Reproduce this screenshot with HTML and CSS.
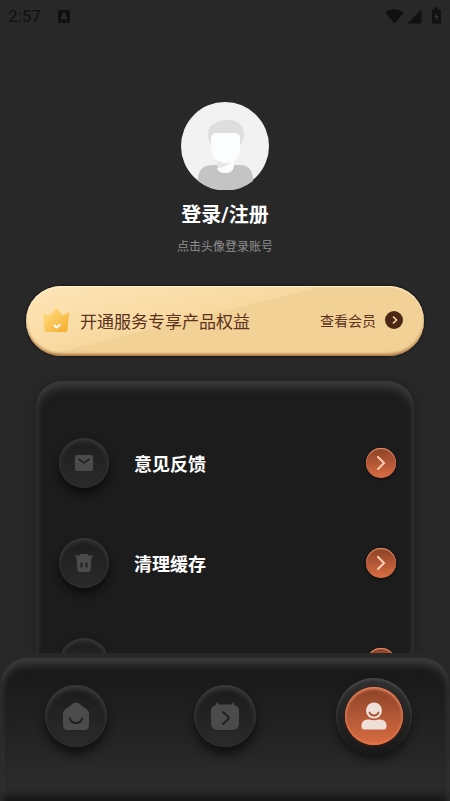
FILE: index.html
```html
<!DOCTYPE html>
<html lang="zh-CN">
<head>
<meta charset="utf-8">
<meta name="viewport" content="width=device-width, initial-scale=1">
<title>我的</title>
<link rel="stylesheet" href="styles.css">
</head>
<body>
<header class="status">
  <span class="time">2:57</span>
  <svg class="status-app" width="12" height="13" viewBox="0 0 12 13"><rect width="12" height="13" rx="1" fill="#111"/><path d="M3.3 9.500 6 3.500l2.700 6M4.300 7.700h3.400" fill="none" stroke="#333" stroke-width="1.400"/></svg>
  <svg class="status-icons" width="58" height="18" viewBox="0 0 58 18"><g fill="#111"><path d="M1 5.500Q10.500-1.500 20 5.500L10.500 16.500Z"/><path d="M37.500 2.500V16.500H23.500Z"/><path d="M48 2.500h2V.5h4v2h2q1 0 1 1v12q0 1-1 1h-7q-1 0-1-1z"/></g><path d="m53.500 5-3 5h2l-1 4.500 3-5.500h-2z" fill="#3a3a3a"/></svg>
</header>

<main class="page">
  <section class="profile">
    <button class="avatar" aria-label="头像">
      <svg width="88" height="88" viewBox="0 0 88 88">
        <circle cx="44" cy="44" r="44" fill="#f2f2f2"/>
        <path d="M17 79V76Q18 63 32 63H58Q71 63 72 76V79A44 44 0 0 1 17 79Z" fill="#c4c4c4"/>
        <path d="M36 56H53V63Q52 71 45 71Q37 71 36 63Z" fill="#e8e8e8"/>
        <path d="M36 66Q46 66 53 57V63Q52 71 45 71Q37 71 36 66Z" fill="#fdfdfd"/>
        <path d="M31 43Q27 40 27 33Q27 23 35 21Q38 18 45 18H50Q62 20 63 31Q63 39 59 43Z" fill="#dedede"/>
        <path d="M30 36Q30 31 36 31H53Q59 31 59 36V46Q58 61 45 61Q31 60 30 46Z" fill="#fcfdff"/>
      </svg>
    </button>
    <h1 class="name">登录/注册</h1>
    <p class="hint">点击头像登录账号</p>
  </section>

  <a class="banner" href="#vip">
    <svg class="crown" width="26" height="26" viewBox="0 0 26 26">
      <defs><linearGradient id="gold" x1="0" y1="0" x2="1" y2="1"><stop offset="0" stop-color="#ffe18b"/><stop offset="1" stop-color="#f5ac28"/></linearGradient></defs>
      <path d="M0 6Q4 8 6.500 8.500L13 1 19.500 8.500Q22 8 26 5L24.500 23Q24.400 25 22.500 25H3.500Q1.700 25 1.500 23Z" fill="url(#gold)"/>
      <path d="m11 18 2.500 2.500 4-3" fill="none" stroke="#fff" stroke-width="2"/>
    </svg>
    <span class="banner-title">开通服务专享产品权益</span>
    <span class="banner-more">查看会员</span>
    <svg width="18" height="18" viewBox="0 0 18 18"><circle cx="9" cy="9" r="9" fill="#4b2717"/><path d="m8 5.500 3.500 3.500L8 12.500" fill="none" stroke="#f5d499" stroke-width="1.600"/></svg>
  </a>

  <ul class="menu">
    <li><button class="row">
      <span class="knob"><svg width="18" height="16" viewBox="0 0 18 16"><rect width="18" height="16" rx="2" fill="#4b4b4b"/><path d="m3.500 4 5.500 4 5.500-4" fill="none" stroke="#222" stroke-width="1.800"/></svg></span>
      <span class="label">意见反馈</span>
      <span class="go"><svg width="10" height="14" viewBox="0 0 10 14"><path d="m2 1 6 6-6 6" /></svg></span>
    </button></li>
    <li><button class="row">
      <span class="knob"><svg width="18" height="18" viewBox="0 0 18 18"><path d="M0 1.500h5V.5Q5 0 5.500 0h7Q13 0 13 .5v1h5V3h-1.500L15.500 16q-.2 2-2 2H4.500q-1.800 0-2-2L1.500 3H0z" fill="#4b4b4b"/><path d="M6.500 8.500v5m5-5v5" stroke="#222" stroke-width="2"/></svg></span>
      <span class="label">清理缓存</span>
      <span class="go"><svg width="10" height="14" viewBox="0 0 10 14"><path d="m2 1 6 6-6 6" /></svg></span>
    </button></li>
    <li><button class="row" aria-label="更多">
      <span class="knob"></span>
      <span class="label"></span>
      <span class="go"></span>
    </button></li>
  </ul>
</main>

<nav class="tabs">
  <div class="tabs-panel">
    <a class="tab" href="#home" aria-label="首页"><svg width="26" height="28" viewBox="0 0 26 28"><path d="M10 1.500Q13-.5 16 1.500L24 7.500Q26 9 26 11V23Q26 28 21 28H5Q0 28 0 23V11Q0 9 2 7.500Z" fill="#4b4b4b"/><path d="M7 16.500Q8 21 13 21T19 16.500" fill="none" stroke="#202020" stroke-width="2" stroke-linecap="round"/></svg></a>
    <a class="tab" href="#discover" aria-label="发现"><svg width="28" height="28" viewBox="0 0 28 28"><path d="M5 4V1.500Q5 0 6 .5 7 1 7.500 2.500H20.500Q21 1 22 .5 23 0 23 1.500V3Q28 4 28 9V21Q28 28 21 28H7Q0 28 0 21V9Q0 4 5 3Z" fill="#4b4b4b"/><path d="m12 10 5 4.500q1.500 1.500 0 3L12 22" fill="none" stroke="#202020" stroke-width="2" stroke-linecap="round"/></svg></a>
    <a class="tab active" href="#me" aria-label="我的" aria-current="page"><span class="disc"><svg width="26" height="28" viewBox="0 0 26 28"><g fill="#efdfd9"><circle cx="13" cy="8.500" r="8"/><path d="M.5 25Q0 17.500 7 17.500H8.500Q13 19 17.500 17.500H19Q26 17.500 25.500 25Q25 27.500 23 27.500H3Q1 27.500 .5 25Z"/></g><path d="M8.500 10.500Q9.500 13.500 13 13.500T17.500 10.500" fill="none" stroke="#aa5030" stroke-width="1.800" stroke-linecap="round"/></svg></span></a>
  </div>
</nav>
</body>
</html>
```
FILE: styles.css
```css
* {
  box-sizing: border-box;
}

body {
  margin: 0;
  height: 100vh;
  display: flex;
  flex-direction: column;
  background: #282828;
  color: #fff;
  font-family: Roboto, "Noto Sans CJK SC", sans-serif;
}

button {
  border: 0;
  padding: 0;
  background: none;
  color: inherit;
  font: inherit;
  cursor: pointer;
}

a {
  color: inherit;
  text-decoration: none;
}

svg {
  display: block;
  flex: none;
}

.status {
  flex: none;
  display: flex;
  align-items: center;
  height: 32px;
  padding: 0 8px;
}

.time {
  color: #111;
  font-size: 17px;
  line-height: 32px;
}

.status-app {
  margin-left: 17px;
}

.status-icons {
  margin-left: auto;
}

.page {
  flex: 1;
  min-height: 0;
  overflow: hidden;
}

.profile {
  display: flex;
  flex-direction: column;
  align-items: center;
  padding-top: 70px;
}

.avatar {
  border-radius: 50%;
}

.name {
  margin: 9px 0 0;
  font-size: 20px;
  font-weight: 700;
  line-height: 32px;
}

.hint {
  margin: 6px 0 0;
  color: #8e8e8e;
  font-size: 12px;
  line-height: 20px;
}

.banner {
  display: flex;
  align-items: center;
  height: 70px;
  margin: 29px 26px 0;
  padding: 0 21px 2px 17px;
  border-radius: 35px;
  color: #5c321e;
  background:
    linear-gradient(166deg, #ffe6b8 0%, #f7d89f 44%, #f2d196 44%, #f2d196 100%);
  box-shadow: inset 0 -3px 3px -1px #a7713f, inset 0 1px 1px #ffefcd, 0 0 2px 1px #1c1b1b;
}

.banner-title {
  flex: 1;
  margin-left: 11px;
  font-size: 17px;
  white-space: nowrap;
}

.banner-more {
  margin-right: 9px;
  font-size: 14px;
}

.menu {
  list-style: none;
  margin: 25px 36px 0;
  padding: 32px 18px 32px 23px;
  border-radius: 26px;
  background: #1c1c1c;
  box-shadow: inset 0 7px 8px #3b3b3b, inset 0 0 6px #2b2b2b, 0 0 8px 1px #202020;
}

.row {
  display: flex;
  align-items: center;
  width: 100%;
  height: 100px;
  text-align: left;
}

.knob {
  flex: none;
  display: grid;
  place-items: center;
  width: 50px;
  height: 50px;
  border-radius: 50%;
  background: linear-gradient(#1d1d1d, #2b2b2b);
  box-shadow: inset 0 3px 4px #383838, inset 0 0 3px #303030, 0 6px 9px #0d0d0d;
}

.label {
  flex: 1;
  margin-left: 25px;
  font-size: 18px;
  font-weight: 700;
}

.go,
.disc {
  display: grid;
  place-items: center;
  border-radius: 50%;
  background: linear-gradient(#8b4228, #d96d42);
}

.go {
  width: 30px;
  height: 30px;
  box-shadow: inset 0 1px 1px #ef9470, inset 0 0 1px #d77853, 0 1px 3px #0b0b0b;
}

.go path {
  fill: none;
  stroke: #ffcdb5;
  stroke-width: 2;
  stroke-linecap: round;
}

.tabs {
  flex: none;
  padding: 5px 1px 0;
  background: #282828;
}

.tabs-panel {
  display: grid;
  grid-template-columns: repeat(3, 1fr);
  justify-items: center;
  align-items: center;
  padding: 20px 0 47px;
  border-radius: 26px 26px 0 0;
  background: linear-gradient(#171717, #2e2e2e);
  box-shadow: inset 0 7px 8px #3b3b3b, inset 0 -8px 8px -3px #131313, inset 0 0 6px #303030;
}

.tab {
  display: grid;
  place-items: center;
  width: 62px;
  height: 62px;
  border-radius: 50%;
  background: linear-gradient(#1b1b1b, #2b2b2b);
  box-shadow: inset 0 4px 5px #3b3b3b, inset 0 0 3px #303030, 0 7px 10px #101010;
}

.tab.active {
  width: 76px;
  height: 76px;
  background: linear-gradient(#303030, #191919);
  box-shadow: inset 0 2px 3px #484848, 0 6px 9px #141414;
}

.disc {
  width: 58px;
  height: 58px;
  box-shadow: inset 0 2px 3px #ef8a62, inset 0 -1px 3px #f07c4c, 0 1px 3px #4b2114;
}
```
